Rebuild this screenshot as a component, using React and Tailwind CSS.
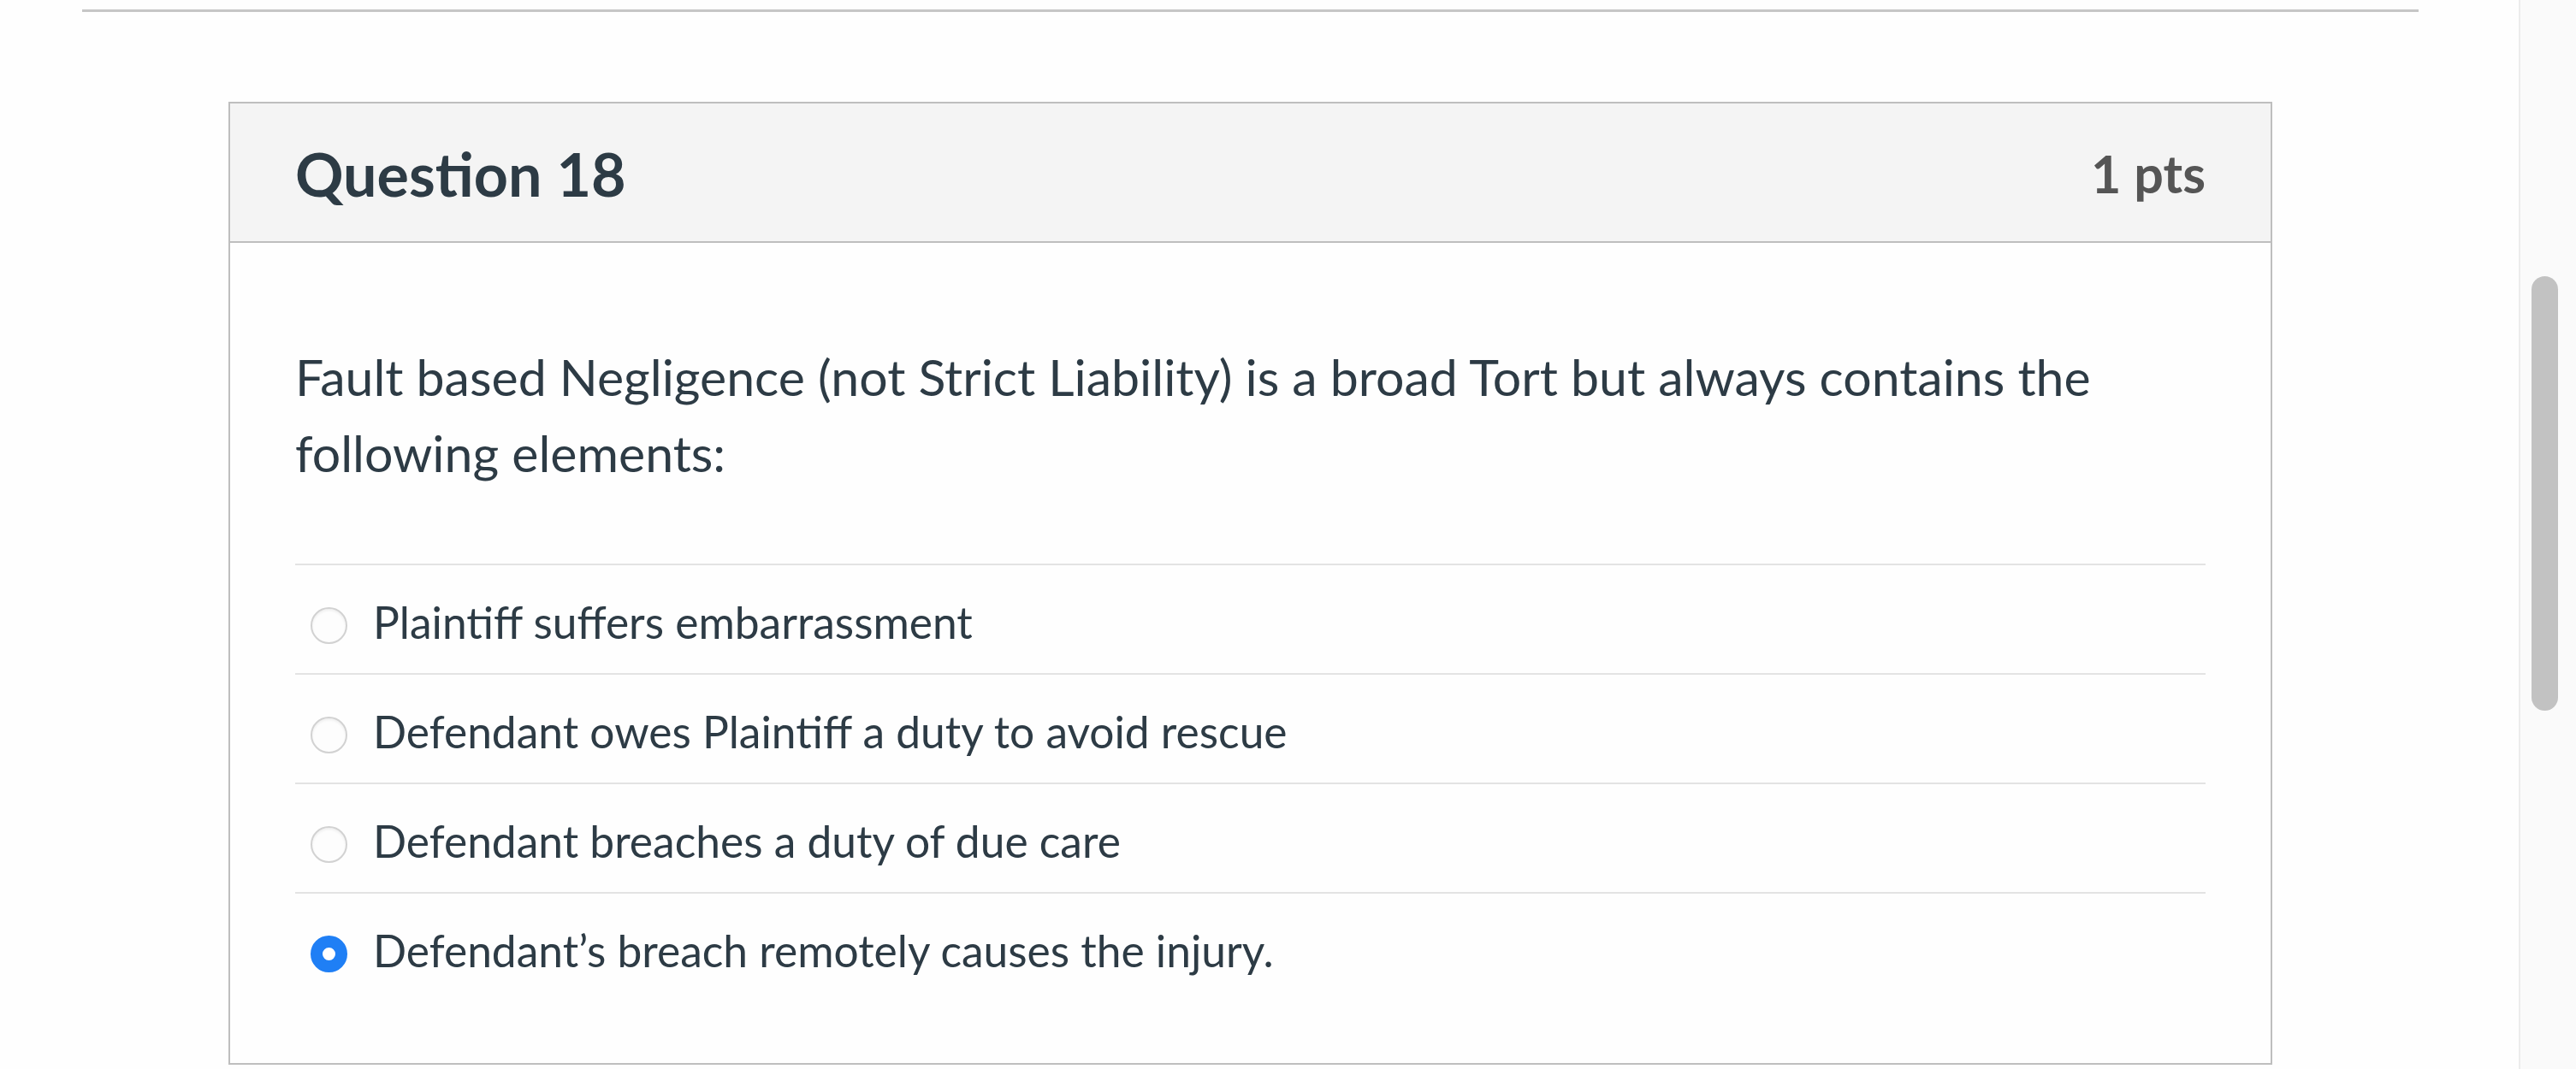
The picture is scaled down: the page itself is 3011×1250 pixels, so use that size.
import React from "react";

const answers = [
  { text: "Plaintiff suffers embarrassment", selected: false },
  { text: "Defendant owes Plaintiff a duty to avoid rescue", selected: false },
  { text: "Defendant breaches a duty of due care", selected: false },
  { text: "Defendant\u2019s breach remotely causes the injury.", selected: true },
];

const Radio = ({ selected }) =>
  selected ? (
    <div className="w-[43px] h-[43px] shrink-0 rounded-full border-[14px] border-[#1f7ff5] bg-white mt-[6px]" />
  ) : (
    <div className="w-[43px] h-[43px] shrink-0 rounded-full border-2 border-[#d2d2d2] bg-[#fdfdfd] shadow-[inset_0_2px_3px_rgba(0,0,0,0.06)] mt-[6px]" />
  );

const AnswerRow = ({ text, selected }) => (
  <div className="flex items-center h-[128px] border-t-2 border-[#e3e3e3] pt-[8px]">
    <div className="ml-[18px]">
      <Radio selected={selected} />
    </div>
    <div className="ml-[30px] text-[51.5px] text-[#2d3b45]">{text}</div>
  </div>
);

export default function App() {
  return (
    <div className="flex w-[3011px] h-[1250px] overflow-hidden bg-[#fefefe] font-['Lato',sans-serif]">
      <div className="w-[2944px] shrink-0">
        <div className="ml-[96px] mt-[11px] w-[2731px] h-[3px] bg-[#c6c6c6]" />

        {/* question card */}
        <div className="ml-[267px] mt-[105px] w-[2389px] border-2 border-[#bebebe] bg-[#fefefe]">
          <div className="flex items-center justify-between h-[163px] px-[76px] pt-[3px] bg-[#f4f4f4] border-b-2 border-[#bebebe]">
            <div className="text-[70px] font-bold text-[#2d3b45]">Question 18</div>
            <div className="text-[61px] font-bold text-[#555555]">1 pts</div>
          </div>
          <div className="px-[76px] pt-[112px] pb-[72px]">
            <div className="text-[59px] leading-[89px] text-[#2d3b45]">
              Fault based Negligence (not Strict Liability) is a broad Tort but
              always contains the following elements:
            </div>
            <div className="mt-[85px]">
              {answers.map((a) => (
                <AnswerRow key={a.text} text={a.text} selected={a.selected} />
              ))}
            </div>
          </div>
        </div>
      </div>

      {/* scrollbar */}
      <div className="w-[67px] shrink-0 h-full bg-[#fafafa] border-l-2 border-[#ececec] pt-[323px] pl-[13px]">
        <div className="w-[31px] h-[508px] rounded-full bg-[#c2c2c2]" />
      </div>
    </div>
  );
}
